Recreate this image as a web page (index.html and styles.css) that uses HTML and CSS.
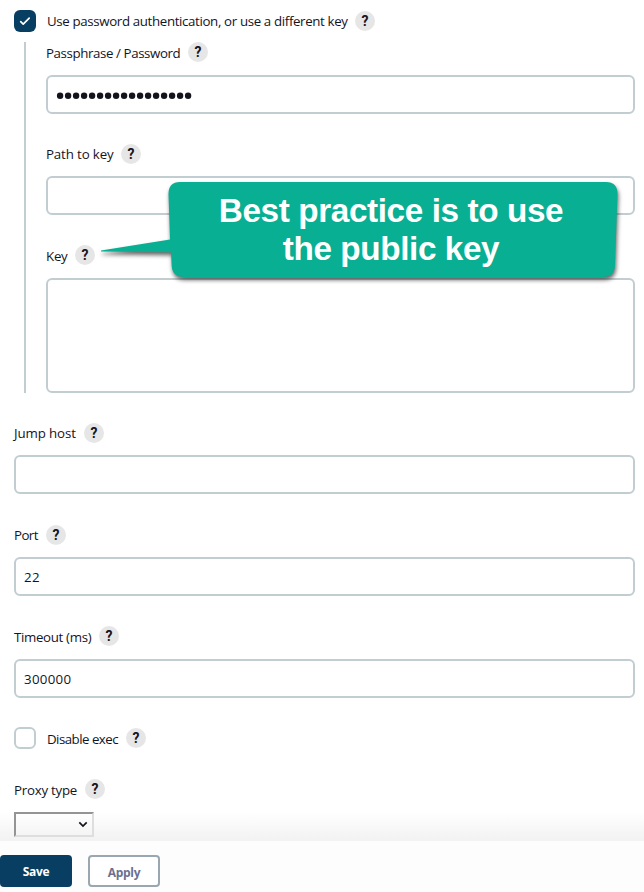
FILE: index.html
```
<!DOCTYPE html>
<html lang="en">
<head>
<meta charset="utf-8">
<title>SSH key settings</title>
<link rel="stylesheet" href="styles.css">
</head>
<body>
<main class="form">
  <div class="check-row first">
    <span class="checkbox checked"><svg viewBox="0 0 22 22" width="22" height="22"><path d="M6.7 11.6l2.5 2.6 6-6.1" fill="none" stroke="#fff" stroke-width="1.7" stroke-linecap="round" stroke-linejoin="round"/></svg></span>
    <label class="label w-auth">Use password authentication, or use a different key</label><span class="help">?</span>
  </div>
  <section class="nested">
    <div class="field">
      <div class="head"><label class="label w-pass">Passphrase / Password</label><span class="help">?</span></div>
      <div class="input"><svg class="dots" width="138" height="10" viewBox="0 0 138 10"><path d="M4.1 5.8h129" stroke="#14141f" stroke-width="6.4" stroke-linecap="round" stroke-dasharray="0 8"/></svg></div>
    </div>
    <div class="field path">
      <div class="head"><label class="label w-path">Path to key</label><span class="help">?</span></div>
      <div class="input"></div>
    </div>
    <div class="field key">
      <div class="head"><label class="label w-key">Key</label><span class="help">?</span></div>
      <div class="input area"></div>
    </div>
    <aside class="callout">
      <svg width="540" height="120" viewBox="0 0 540 120"><path d="M90 12H516Q527.500 12 527.500 24L525 96Q524 107 513 107H94Q82.500 107 81.700 96L81 82.300L11 81.500V80.600L80 69.600L78.500 24Q78.500 12 90 12Z" fill="#09af92"/></svg>
      <p class="note"><span class="line-a">Best practice is to use</span><span class="line-b">the public key</span></p>
    </aside>
  </section>
  <div class="field jump">
    <div class="head"><label class="label w-jump">Jump host</label><span class="help">?</span></div>
    <div class="input"></div>
  </div>
  <div class="field port">
    <div class="head"><label class="label w-port">Port</label><span class="help">?</span></div>
    <div class="input">22</div>
  </div>
  <div class="field timeout">
    <div class="head"><label class="label w-time">Timeout (ms)</label><span class="help">?</span></div>
    <div class="input">300000</div>
  </div>
  <div class="check-row exec">
    <span class="checkbox"></span>
    <label class="label w-exec">Disable exec</label><span class="help">?</span>
  </div>
  <div class="field proxy">
    <div class="head"><label class="label w-proxy">Proxy type</label><span class="help">?</span></div>
    <div class="select"><svg width="10" height="7" viewBox="0 0 10 7"><path d="M1.300 1.400L5 5.100l3.700-3.700" fill="none" stroke="#14141f" stroke-width="1.700"/></svg></div>
  </div>
</main>
<footer class="actions">
  <button class="btn save">Save</button>
  <button class="btn apply">Apply</button>
</footer>
</body>
</html>
```
FILE: styles.css
```
* { box-sizing: border-box; }
body {
  margin: 0;
  height: 892px;
  overflow: hidden;
  display: flex;
  flex-direction: column;
  background: #fff;
  color: #14141f;
  font: 13.3px/20px "Open Sans", "Noto Sans", sans-serif;
}
.form {
  height: 841px;
  flex: none;
  padding: 10px 9px 0 14px;
  background: linear-gradient(#fff 0 812px, #f2f2f2 841px);
}
.check-row { display: flex; align-items: center; height: 22px; }
.checkbox {
  width: 22px;
  height: 22px;
  flex: none;
  margin-right: 11px;
  border: 2px solid #c1cdd0;
  border-radius: 6px;
  background: #fff;
}
.checkbox.checked { border: 0; background: #073e61; }
.checkbox svg { display: block; }
.head { display: flex; height: 20px; }
.label { display: block; white-space: nowrap; }
.w-auth { width: 308px; letter-spacing: -.36px; }
.w-pass { width: 142px; letter-spacing: -.4px; padding-top: 1px; }
.w-path { width: 75px; letter-spacing: -.14px; }
.w-key { width: 29px; letter-spacing: -.25px; padding-top: 1px; }
.w-jump { width: 70px; letter-spacing: -.12px; }
.w-port { width: 32px; letter-spacing: -.6px; }
.w-time { width: 85px; letter-spacing: -.34px; padding-top: 1px; }
.w-exec { width: 79px; letter-spacing: -.53px; padding-top: 2px; }
.w-proxy { width: 71px; letter-spacing: -.25px; padding-top: 1px; }
.help {
  width: 20px;
  height: 20px;
  flex: none;
  border-radius: 50%;
  background: #e6e6e6;
  font: 700 14px/20px Roboto, sans-serif;
  text-align: center;
}
.nested {
  position: relative;
  height: 351px;
  margin: 10px 0 0 10px;
  padding-left: 20px;
  border-left: 2px solid #c1cdd0;
}
.input {
  display: flex;
  align-items: center;
  height: 39px;
  margin-top: 13px;
  padding: 0 8px;
  border: 2px solid #c1cdd0;
  border-radius: 6px;
  background: #fff;
  letter-spacing: .3px;
}
.area { height: 115px; }
.path { margin-top: 30px; }
.path .input { margin-top: 12px; }
.key { margin-top: 30px; }
.jump { margin-top: 30px; }
.jump .input, .port .input { margin-top: 12px; }
.port { margin-top: 31px; }
.timeout { margin-top: 30px; }
.exec { margin-top: 29px; }
.proxy { margin-top: 30px; }
.select {
  display: flex;
  align-items: center;
  justify-content: flex-end;
  width: 80px;
  height: 25px;
  margin-top: 13px;
  padding-right: 4px;
  border: 2px solid;
  border-color: #949494 #dedede #dedede #949494;
}
.callout { position: absolute; left: 64px; top: 128px; width: 540px; height: 120px; }
.callout svg { display: block; filter: drop-shadow(1px 3px 2px rgba(0, 0, 0, .6)); }
.note {
  position: absolute;
  left: 78px;
  top: 22px;
  width: 446px;
  margin: 0;
  color: #fff;
  font: 700 33.3px/38px "Liberation Sans", sans-serif;
  letter-spacing: -.4px;
  text-align: center;
}
.note span { display: block; }
.actions { display: flex; gap: 16px; height: 51px; padding-top: 14px; background: #fdfdfd; }
.btn {
  width: 72px;
  height: 32px;
  padding: 2px 0 0;
  border-radius: 4px;
  font: 700 12px/28px "Open Sans", "Noto Sans", sans-serif;
  letter-spacing: -.3px;
}
.save { border: 0; background: #073e61; color: #fff; }
.apply { border: 2px solid #9aa7b0; background: #fff; color: #6b7090; }
```
